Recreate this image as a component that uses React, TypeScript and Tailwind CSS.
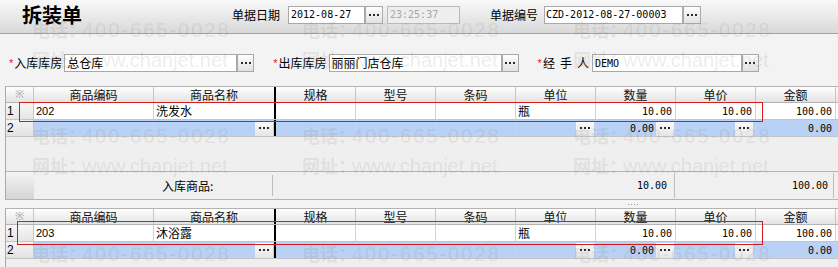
import React from 'react';

const cjk = "font-['Noto_Sans_CJK_SC',sans-serif]";
const mono = "font-['DejaVu_Sans_Mono','Liberation_Mono',monospace]";
const sans = "font-['Liberation_Sans',Arial,sans-serif]";

function Dots() {
  return (
    <span className="flex gap-[2px]">
      <span className="h-[2px] w-[2px] bg-[#2a2a2a]" />
      <span className="h-[2px] w-[2px] bg-[#2a2a2a]" />
      <span className="h-[2px] w-[2px] bg-[#2a2a2a]" />
    </span>
  );
}

function PickButton({ className = '' }: { className?: string }) {
  return (
    <div
      className={`flex h-full shrink-0 items-center justify-center border border-[#a9a9a9] bg-linear-to-b from-[#fdfdfd] to-[#e2e2e2] ${className}`}
    >
      <Dots />
    </div>
  );
}

function CellButton() {
  return (
    <div className="flex h-[15px] w-[18px] shrink-0 items-center justify-center bg-linear-to-b from-[#fbfbfb] to-[#e6e6e6]">
      <Dots />
    </div>
  );
}

function Lookup({ inputClass, value, latin = false }: { inputClass: string; value: string; latin?: boolean }) {
  return (
    <div className="flex h-[18px]">
      <div
        className={`flex h-full items-center border border-[#a8a8a8] bg-white pl-[2px] ${inputClass} ${
          latin ? `${mono} text-[10px]` : `${cjk} text-[12px]`
        }`}
      >
        {value}
      </div>
      <PickButton className="w-[17px]" />
    </div>
  );
}

function Required({ children }: { children: React.ReactNode }) {
  return (
    <span className={`flex items-center text-[12px] ${cjk}`}>
      <span className={`mr-[1px] text-[11px] text-[#e01818] ${sans}`}>*</span>
      {children}
    </span>
  );
}

type Cell = { text?: string; align?: 'left' | 'right'; latin?: boolean };

const widths = [
  'w-[120px]',
  'w-[122px] border-r-2 border-r-black',
  'w-[80px]',
  'w-[80px]',
  'w-[80px]',
  'w-[80px]',
  'w-[80px]',
  'w-[80px]',
  'w-[80px]',
];

const titles = ['商品编码', '商品名称', '规格', '型号', '条码', '单位', '数量', '单价', '金额'];

function HeaderRow() {
  return (
    <div className="flex h-[17px] border-y border-[#b3b3b3] bg-linear-to-b from-white to-[#e3e3e3]">
      <div className="flex w-[28px] shrink-0 items-center justify-center border-r border-[#c6c6c6] text-[11px] text-[#a0a0a0]">
        ※
      </div>
      {titles.map((t, i) => (
        <div
          key={t}
          className={`flex shrink-0 items-center justify-center border-r border-[#c6c6c6] text-[12px] text-[#111] ${cjk} ${widths[i]}`}
        >
          {t}
        </div>
      ))}
      <div className="w-[20px] shrink-0" />
    </div>
  );
}

function DataRow({ cells }: { cells: Cell[] }) {
  return (
    <div className="flex h-[17px] border-b border-[#c4c4c4] bg-white">
      <div
        className={`flex w-[28px] shrink-0 items-center border-r border-[#c6c6c6] bg-linear-to-b from-[#f7f7f7] to-[#e6e6e6] pl-[1px] text-[12px] text-black ${sans}`}
      >
        1
      </div>
      {cells.map((c, i) => (
        <div
          key={i}
          className={`flex shrink-0 items-center border-r border-[#d2d2d2] ${widths[i]} ${
            c.align === 'right' ? 'justify-end pr-[3px]' : 'pl-[2px]'
          }`}
        >
          {c.text && (
            <span
              className={
                c.latin
                  ? c.align === 'right'
                    ? `${mono} text-[10px] text-black`
                    : `${sans} text-[11px] text-black`
                  : `${cjk} text-[12px] text-black`
              }
            >
              {c.text}
            </span>
          )}
        </div>
      ))}
      <div className="w-[20px] shrink-0" />
    </div>
  );
}

function EditRow() {
  return (
    <div className="flex h-[17px] border-b border-[#c4c4c4] bg-[#b9d1f4]">
      <div
        className={`flex w-[28px] shrink-0 items-center border-r border-[#c6c6c6] bg-linear-to-b from-[#f4f4f4] to-[#e2e2e2] pl-[1px] text-[12px] text-black ${sans}`}
      >
        2
      </div>
      <div className="w-[120px] shrink-0 border-r border-[#d2d2d2]" />
      <div className="flex w-[122px] shrink-0 items-center justify-end border-r-2 border-r-black pr-px">
        <CellButton />
      </div>
      <div className="w-[80px] shrink-0 border-r border-[#d2d2d2]" />
      <div className="w-[80px] shrink-0 border-r border-[#d2d2d2]" />
      <div className="w-[80px] shrink-0 border-r border-[#d2d2d2]" />
      <div className="flex w-[80px] shrink-0 items-center justify-end border-r border-[#d2d2d2] pr-px">
        <CellButton />
      </div>
      <div className="flex w-[80px] shrink-0 items-center justify-end border-r border-[#d2d2d2] pr-px">
        <span className={`mr-[2px] text-[10px] text-black ${mono}`}>0.00</span>
        <CellButton />
      </div>
      <div className="flex w-[80px] shrink-0 items-center justify-end border-r border-[#d2d2d2] pr-[2px]">
        <CellButton />
      </div>
      <div className="flex w-[80px] shrink-0 items-center justify-end border-r border-[#d2d2d2] pr-[3px]">
        <span className={`text-[10px] text-black ${mono}`}>0.00</span>
      </div>
      <div className="w-[20px] shrink-0" />
    </div>
  );
}

function Phone({ className }: { className: string }) {
  return (
    <div className={`absolute flex items-baseline whitespace-nowrap leading-none text-[#7a7a7a]/15 ${className}`}>
      <span className={`text-[18px] font-bold ${cjk}`}>电话：</span>
      <span className={`ml-[-4px] text-[20px] tracking-[2px] ${sans}`}>400-665-0028</span>
    </div>
  );
}

function Site({ className }: { className: string }) {
  return (
    <div className={`absolute flex items-baseline whitespace-nowrap leading-none text-[#7a7a7a]/15 ${className}`}>
      <span className={`text-[18px] font-bold ${cjk}`}>网址：</span>
      <span className={`ml-[-4px] text-[20px] ${sans}`}>www.chanjet.net</span>
    </div>
  );
}

const row202: Cell[] = [
  { text: '202', latin: true },
  { text: '洗发水' },
  {},
  {},
  {},
  { text: '瓶' },
  { text: '10.00', latin: true, align: 'right' },
  { text: '10.00', latin: true, align: 'right' },
  { text: '100.00', latin: true, align: 'right' },
];

const row203: Cell[] = [
  { text: '203', latin: true },
  { text: '沐浴露' },
  {},
  {},
  {},
  { text: '瓶' },
  { text: '10.00', latin: true, align: 'right' },
  { text: '10.00', latin: true, align: 'right' },
  { text: '100.00', latin: true, align: 'right' },
];

export default function App() {
  return (
    <div className="relative h-[267px] w-[838px] overflow-hidden bg-[#f3f3f3] text-black">
      {/* title bar */}
      <div className="flex h-[34px] items-center border-b border-[#a2a2a2] bg-linear-to-b from-[#f9f9f9] to-[#d9d9d9] pb-[4px]">
        <div className={`w-[232px] shrink-0 pl-[22px] text-[20px] leading-none font-bold ${cjk}`}>拆装单</div>
        <span className={`text-[12px] ${cjk}`}>单据日期</span>
        <div className="ml-[8px] flex h-[18px]">
          <div className={`flex w-[77px] items-center border border-[#a8a8a8] bg-white pl-[2px] text-[10px] ${mono}`}>
            2012-08-27
          </div>
          <PickButton className="w-[18px]" />
        </div>
        <div
          className={`ml-[4px] flex h-[18px] w-[73px] items-center border border-[#b9b9b9] bg-[#eeeeee] pl-[2px] text-[10px] text-[#a6a6a6] ${mono}`}
        >
          23:25:37
        </div>
        <span className={`ml-[30px] text-[12px] ${cjk}`}>单据编号</span>
        <div className="ml-[6px] flex h-[18px]">
          <div className={`flex w-[139px] items-center border border-[#a8a8a8] bg-white pl-[1px] text-[10px] ${mono}`}>
            CZD-2012-08-27-00003
          </div>
          <PickButton className="w-[18px]" />
        </div>
      </div>

      {/* header fields */}
      <div className="mt-[20px] flex h-[18px] items-center pl-[9px]">
        <Required>入库库房</Required>
        <div className="ml-[2px]">
          <Lookup inputClass="w-[173px]" value="总仓库" />
        </div>
        <div className="ml-[19px]">
          <Required>出库库房</Required>
        </div>
        <div className="ml-[2px]">
          <Lookup inputClass="w-[173px]" value="丽丽门店仓库" />
        </div>
        <div className="ml-[19px]">
          <Required>
            <span className="flex gap-[5px]">
              <span>经</span>
              <span>手</span>
              <span>人</span>
            </span>
          </Required>
        </div>
        <div className="ml-[3px]">
          <Lookup inputClass="w-[150px]" value="DEMO" latin />
        </div>
      </div>

      {/* grid 1 */}
      <div className="mt-[14px] ml-[5px] overflow-hidden border-l border-[#a9a9a9]">
        <HeaderRow />
        <DataRow cells={row202} />
        <EditRow />
        <div className="h-[34px] bg-[#efefef]" />
        <div className="flex h-[29px] items-center border-y border-[#b3b3b3] bg-[#f0f0f0]">
          <div className="h-full w-[28px] shrink-0 bg-linear-to-b from-[#f4f4f4] to-[#d5d5d5]" />
          <div className={`flex h-[21px] w-[239px] shrink-0 items-center border-r border-[#bdbdbd] pl-[128px] text-[12px] ${cjk}`}>
            入库商品:
          </div>
          <div className={`flex h-[25px] w-[402px] shrink-0 items-center justify-end border-r border-[#bdbdbd] pr-[7px] text-[10px] ${mono}`}>
            10.00
          </div>
          <div className={`flex h-[25px] w-[159px] shrink-0 items-center justify-end border-r border-[#bdbdbd] pr-[5px] text-[10px] ${mono}`}>
            100.00
          </div>
        </div>
      </div>

      {/* splitter */}
      <div className="flex h-[8px] items-center pl-[628px]">
        <span className="flex gap-[2px]">
          <span className="h-px w-px bg-[#9a9a9a]" />
          <span className="h-px w-px bg-[#9a9a9a]" />
          <span className="h-px w-px bg-[#9a9a9a]" />
          <span className="h-px w-px bg-[#9a9a9a]" />
        </span>
      </div>

      {/* grid 2 */}
      <div className="ml-[5px] h-[60px] overflow-hidden border-l border-[#a9a9a9] bg-[#efefef]">
        <HeaderRow />
        <DataRow cells={row203} />
        <EditRow />
      </div>

      {/* highlight boxes */}
      <div className="absolute top-[102px] left-[19px] h-[20px] w-[744px] border border-[#d21c1c]" />
      <div className="absolute top-[221px] left-[17px] h-[24px] w-[746px] border border-[#d21c1c]" />

      {/* watermark */}
      <div className="pointer-events-none absolute inset-0">
        <Phone className="top-[20px] left-[32px]" />
        <Phone className="top-[20px] left-[302px]" />
        <Phone className="top-[20px] left-[573px]" />
        <Site className="top-[50px] left-[32px]" />
        <Site className="top-[50px] left-[302px]" />
        <Site className="top-[50px] left-[573px]" />
        <Phone className="top-[126px] left-[32px]" />
        <Phone className="top-[126px] left-[302px]" />
        <Phone className="top-[126px] left-[573px]" />
        <Site className="top-[156px] left-[32px]" />
        <Site className="top-[156px] left-[302px]" />
        <Site className="top-[156px] left-[573px]" />
        <Phone className="top-[244px] left-[32px]" />
        <Phone className="top-[244px] left-[302px]" />
        <Phone className="top-[244px] left-[573px]" />
      </div>
    </div>
  );
}
